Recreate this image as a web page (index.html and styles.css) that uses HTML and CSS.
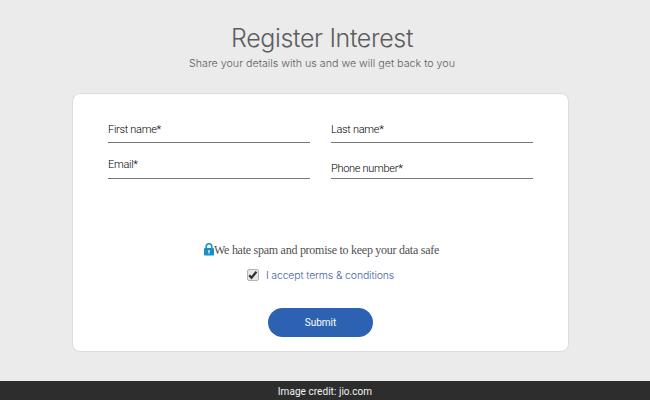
FILE: index.html
```
<!DOCTYPE html>
<html lang="en">
<head>
    <meta charset="UTF-8">
    <title>Register Interest</title>
    <link rel="stylesheet" href="styles.css">
</head>
<body>
<div class="page">
    <h1 class="title">Register Interest</h1>
    <p class="subtitle">Share your details with us and we will get back to you</p>
    <form class="card">
        <div class="fields">
            <label class="field first-name"><span>First name*</span></label>
            <label class="field last-name"><span>Last name*</span></label>
            <label class="field email"><span>Email*</span></label>
            <label class="field phone"><span>Phone number*</span></label>
        </div>
        <p class="spam">
            <svg class="lock" width="10" height="13" viewBox="0 0 10 13">
                <path d="M2.2 6V3.6a2.8 2.8 0 0 1 5.6 0V6" fill="none" stroke="#168fc4" stroke-width="1.5"/>
                <rect x="0" y="5" width="10" height="7.6" rx="1" fill="#168fc4"/>
                <path d="M4.1 7.3h1.8v1.4l-.4.5v1.6h-1V9.2l-.4-.5z" fill="#d5eef8"/>
            </svg>
            <span>We hate spam and promise to keep your data safe</span>
        </p>
        <div class="terms">
            <span class="check">
                <svg width="10" height="10" viewBox="0 0 10 10">
                    <path d="M1.2 5.2l2.3 2.6L8.4 1.8" fill="none" stroke="#303030" stroke-width="2.2"/>
                </svg>
            </span>
            <span class="terms-text">I accept terms &amp; conditions</span>
        </div>
        <button class="submit" type="button">Submit</button>
    </form>
</div>
<div class="credit">Image credit: jio.com</div>
</body>
</html>
```

FILE: styles.css
```
*{ margin:0; padding:0; box-sizing:border-box;}
body{
    display: flex;
    flex-direction: column;
    height: 400px;
    overflow: hidden;
    background: #ebebeb;
    font-family: Roboto,"Liberation Sans",sans-serif;
}
.page{
    height: 381px;
    padding: 22px 81px 0 72px;
}
.title{
    height: 32px;
    padding-left: 3px;
    line-height: 32px;
    text-align: center;
    font-family: Inter,sans-serif;
    font-size: 25px;
    font-weight: 300;
    letter-spacing: -0.35px;
    color: #5c5c5e;
}
.subtitle{
    height: 17px;
    padding-left: 3px;
    line-height: 19px;
    text-align: center;
    white-space: nowrap;
    font-family: Inter,sans-serif;
    font-size: 10.7px;
    font-weight: 300;
    color: #5c5c5e;
}
.card{
    display: flex;
    flex-direction: column;
    align-items: center;
    width: 497px;
    height: 259px;
    margin-top: 22px;
    padding: 14px 35px 0;
    background: #fff;
    border: 1px solid #dcdcdc;
    border-radius: 8px;
}
.fields{
    display: grid;
    grid-template-columns: 202px 202px;
    grid-template-rows: 35px 36px;
    column-gap: 21px;
    width: 425px;
}
.field{
    display: flex;
    align-items: flex-end;
    border-bottom: 1px solid #77747a;
    line-height: 14px;
    font-size: 11px;
    font-weight: 300;
    letter-spacing: -0.3px;
    color: #000;
}
.first-name, .last-name{
    padding-bottom: 5px;
}
.email{
    padding-bottom: 6px;
}
.phone{
    padding-bottom: 2px;
}
.spam{
    display: flex;
    align-items: center;
    height: 16px;
    margin-top: 63px;
    padding-left: 2px;
    white-space: nowrap;
    font-family: "Liberation Serif",serif;
    font-size: 12px;
    letter-spacing: -0.26px;
    color: #505050;
}
.lock{
    margin-top: -1px;
}
.terms{
    display: flex;
    align-items: center;
    gap: 7px;
    height: 16px;
    margin-top: 9px;
}
.check{
    display: flex;
    align-items: center;
    justify-content: center;
    width: 12px;
    height: 12px;
    background: #e6e6e6;
    border: 1px solid #b4b4b4;
    border-radius: 2px;
}
.terms-text{
    font-family: Inter,sans-serif;
    font-size: 10.5px;
    font-weight: 300;
    letter-spacing: -0.15px;
    color: #3f62a6;
}
.submit{
    width: 105px;
    height: 29px;
    margin-top: 25px;
    border: 0;
    border-radius: 15px;
    background: #2c62b1;
    font-family: Roboto,sans-serif;
    font-size: 10px;
    color: #fff;
}
.credit{
    height: 19px;
    line-height: 21px;
    text-align: center;
    background: #2d2d2d;
    font-size: 10px;
    letter-spacing: 0.05px;
    color: #f2f2f2;
}
```
